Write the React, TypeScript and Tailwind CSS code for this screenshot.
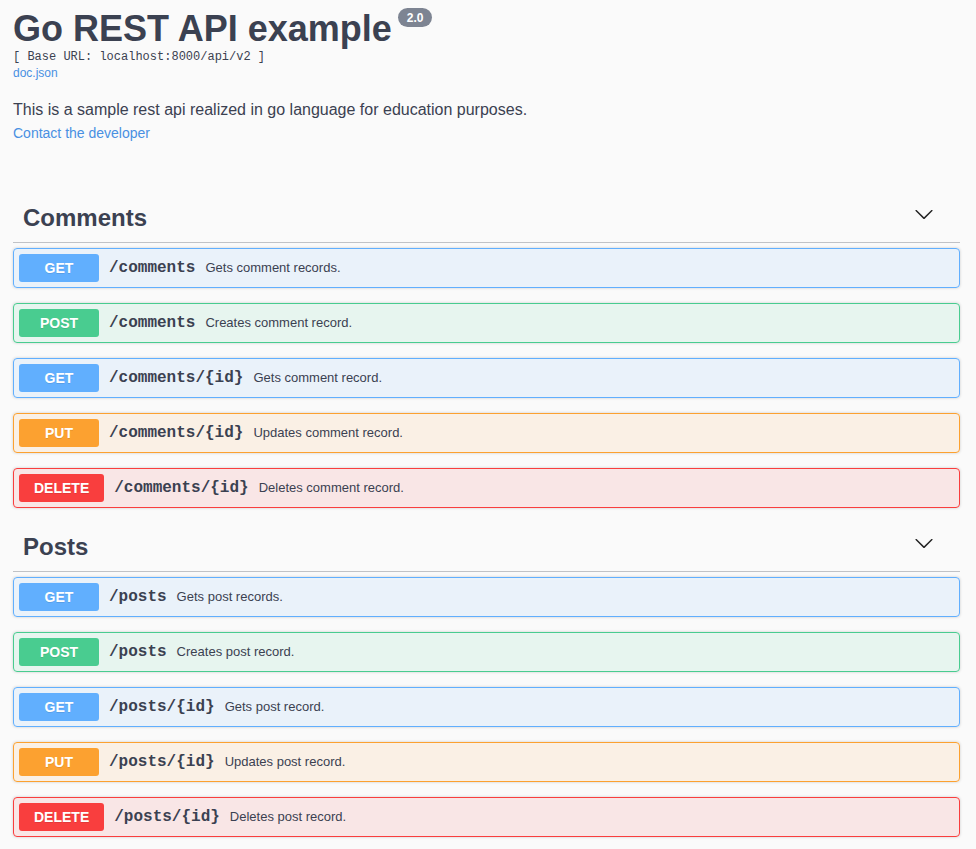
type Method = "GET" | "POST" | "PUT" | "DELETE";

type Op = {
  method: Method;
  path: string;
  summary: string;
};

type Tag = {
  name: string;
  ops: Op[];
};

const methodStyles: Record<Method, { row: string; badge: string }> = {
  GET: { row: "border-[#61affe] bg-[#61affe]/10", badge: "bg-[#61affe]" },
  POST: { row: "border-[#49cc90] bg-[#49cc90]/10", badge: "bg-[#49cc90]" },
  PUT: { row: "border-[#fca130] bg-[#fca130]/10", badge: "bg-[#fca130]" },
  DELETE: { row: "border-[#f93e3e] bg-[#f93e3e]/10", badge: "bg-[#f93e3e]" },
};

const tags: Tag[] = [
  {
    name: "Comments",
    ops: [
      { method: "GET", path: "/comments", summary: "Gets comment records." },
      { method: "POST", path: "/comments", summary: "Creates comment record." },
      { method: "GET", path: "/comments/{id}", summary: "Gets comment record." },
      { method: "PUT", path: "/comments/{id}", summary: "Updates comment record." },
      { method: "DELETE", path: "/comments/{id}", summary: "Deletes comment record." },
    ],
  },
  {
    name: "Posts",
    ops: [
      { method: "GET", path: "/posts", summary: "Gets post records." },
      { method: "POST", path: "/posts", summary: "Creates post record." },
      { method: "GET", path: "/posts/{id}", summary: "Gets post record." },
      { method: "PUT", path: "/posts/{id}", summary: "Updates post record." },
      { method: "DELETE", path: "/posts/{id}", summary: "Deletes post record." },
    ],
  },
];

function Chevron() {
  return (
    <svg width="20" height="20" viewBox="0 0 20 20" className="mb-[8px] text-[#222]">
      <path
        fill="currentColor"
        d="M17.418 6.109c.272-.268.709-.268.979 0s.271.701 0 .969l-7.908 7.83c-.27.268-.707.268-.979 0l-7.908-7.83c-.27-.268-.27-.701 0-.969.271-.268.709-.268.979 0L10 13.25l7.418-7.141z"
      />
    </svg>
  );
}

function OpRow({ op }: { op: Op }) {
  const s = methodStyles[op.method];
  return (
    <div
      className={`mb-[15px] flex h-[40px] items-center rounded-[4px] border p-[5px] shadow-[0_0_3px_rgba(0,0,0,0.19)] ${s.row}`}
    >
      <span
        className={`flex h-[28px] min-w-[80px] items-center justify-center rounded-[3px] px-[15px] text-[14px] font-bold text-white [text-shadow:0_1px_0_rgba(0,0,0,0.1)] ${s.badge}`}
      >
        {op.method}
      </span>
      <span className="ml-[10px] font-['Liberation_Mono',monospace] text-[16px] font-bold text-[#3b4151]">
        {op.path}
      </span>
      <span className="ml-[10px] text-[13px] text-[#3b4151]">{op.summary}</span>
    </div>
  );
}

export default function App() {
  return (
    <div className="min-h-screen bg-[#fafafa] pl-[13px] pr-[16px] font-['Liberation_Sans',Arial,sans-serif] text-[#3b4151]">
      {/* info */}
      <div className="pt-[7px]">
        <div className="flex items-start">
          <h2 className="text-[36px] font-bold leading-[44px]">Go REST API example</h2>
          <span className="ml-[6px] mt-[1px] flex h-[19px] items-center rounded-full bg-[#7d8492] px-[9px] text-[12px] font-bold text-white">
            2.0
          </span>
        </div>
        <div className="font-['Liberation_Mono',monospace] text-[12px] leading-[12px]">
          [ Base URL: localhost:8000/api/v2 ]
        </div>
        <a className="mt-[3px] block text-[12px] leading-[14px] text-[#4990e2]">doc.json</a>
        <p className="mt-[20px] text-[16px] leading-[20px]">
          This is a sample rest api realized in go language for education purposes.
        </p>
        <a className="mt-[4px] block text-[14px] leading-[18px] text-[#4990e2]">Contact the developer</a>
      </div>

      <div className="mt-[52px]">
        {tags.map((tag) => (
          <div key={tag.name}>
            <div className="mb-[5px] flex items-center justify-between border-b border-[#3b4151]/30 pb-[10px] pl-[10px] pr-[26px] pt-[10px]">
              <h3 className="text-[24px] font-bold leading-[28px]">{tag.name}</h3>
              <Chevron />
            </div>
            {tag.ops.map((op, i) => (
              <OpRow key={i} op={op} />
            ))}
          </div>
        ))}
      </div>
    </div>
  );
}
